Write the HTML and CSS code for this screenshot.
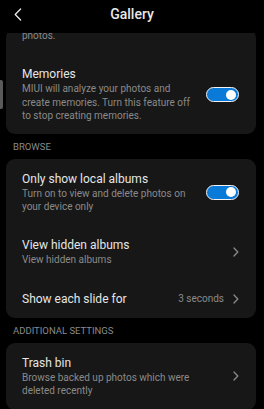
FILE: index.html
```html
<!DOCTYPE html>
<html lang="en">
<head>
<meta charset="utf-8">
<title>Gallery settings</title>
<link rel="stylesheet" href="styles.css">
</head>
<body>
<div class="screen">
  <header class="topbar">
    <svg class="back" width="8" height="13" viewBox="0 0 8 13" aria-hidden="true">
      <path d="M6.6 1 L1.2 6.5 L6.6 12" fill="none" stroke="#e8e8e8" stroke-width="1.3" stroke-linecap="round" stroke-linejoin="round"/>
    </svg>
    <h1 class="title">Gallery</h1>
    <span class="spacer"></span>
  </header>
  <main class="content">
    <section class="card card-first">
      <div class="item item-cut">
        <div class="text"><p class="desc">photos.</p></div>
      </div>
      <div class="item item-last">
        <div class="text">
          <p class="name">Memories</p>
          <p class="desc">MIUI will analyze your photos and create memories. Turn this feature off to stop creating memories.</p>
        </div>
        <span class="toggle on"><span class="knob"></span></span>
      </div>
    </section>

    <h2 class="label">Browse</h2>
    <section class="card">
      <div class="item">
        <div class="text">
          <p class="name">Only show local albums</p>
          <p class="desc">Turn on to view and delete photos on your device only</p>
        </div>
        <span class="toggle on"><span class="knob"></span></span>
      </div>
      <div class="item">
        <div class="text">
          <p class="name">View hidden albums</p>
          <p class="desc">View hidden albums</p>
        </div>
        <svg class="chev" width="6" height="10" viewBox="0 0 6 10" aria-hidden="true"><path d="M1 1 L4.8 5 L1 9" fill="none" stroke="#8a8a8a" stroke-width="1.3" stroke-linecap="round" stroke-linejoin="round"/></svg>
      </div>
      <div class="item item-last">
        <div class="text">
          <p class="name">Show each slide for</p>
        </div>
        <span class="value">3 seconds</span>
        <svg class="chev" width="6" height="10" viewBox="0 0 6 10" aria-hidden="true"><path d="M1 1 L4.8 5 L1 9" fill="none" stroke="#8a8a8a" stroke-width="1.3" stroke-linecap="round" stroke-linejoin="round"/></svg>
      </div>
    </section>

    <h2 class="label">Additional settings</h2>
    <section class="card">
      <div class="item">
        <div class="text">
          <p class="name">Trash bin</p>
          <p class="desc">Browse backed up photos which were deleted recently</p>
        </div>
        <svg class="chev" width="6" height="10" viewBox="0 0 6 10" aria-hidden="true"><path d="M1 1 L4.8 5 L1 9" fill="none" stroke="#8a8a8a" stroke-width="1.3" stroke-linecap="round" stroke-linejoin="round"/></svg>
      </div>
    </section>
  </main>
  <div class="scrollbar"></div>
</div>
</body>
</html>
```
FILE: styles.css
```css
* { box-sizing: border-box; }
html, body {
  margin: 0;
  padding: 0;
  background: #000;
}
body {
  font-family: Roboto, "Noto Sans", "Liberation Sans", sans-serif;
  color: #e6e6e6;
  width: 264px;
  height: 409px;
  overflow: hidden;
}
.screen {
  position: relative;
  width: 264px;
  height: 409px;
  display: flex;
  flex-direction: column;
  overflow: hidden;
}
.topbar {
  flex: 0 0 33px;
  height: 33px;
  display: grid;
  grid-template-columns: 1fr auto 1fr;
  align-items: start;
  padding-top: 4px;
  background: #000;
}
.back {
  justify-self: start;
  margin-left: 14px;
  margin-top: 4px;
}
.title {
  margin: 0;
  font-size: 14px;
  font-weight: 500;
  line-height: 20px;
  color: #e8e8e8;
}
.content {
  flex: 1;
  overflow: hidden;
}
.card {
  margin: 0 8px 0 6px;
  background: #171717;
  border-radius: 9px;
}
.card-first {
  margin-top: -4px;
}
.item {
  display: flex;
  align-items: center;
  padding: 12px 17px 12px 16px;
}
.item-cut {
  padding-top: 0;
}
.item-last {
  padding-bottom: 11px;
}
.text {
  flex: 1;
  min-width: 0;
}
.name {
  margin: 0;
  font-size: 12px;
  line-height: 16px;
  color: #e6e6e6;
}
.desc {
  margin: 0;
  max-width: 172px;
  font-size: 10px;
  line-height: 13.4px;
  color: #8a8a8a;
}
.label {
  margin: 0;
  padding: 7px 0 6px 13px;
  font-size: 9.5px;
  line-height: 12px;
  font-weight: 400;
  text-transform: uppercase;
  color: #8a8a8a;
}
.toggle {
  position: relative;
  flex: 0 0 33px;
  width: 33px;
  height: 15px;
  border-radius: 8px;
  border: 1.4px solid #f2f2f2;
  background: #0a7ad9;
}
.toggle .knob {
  position: absolute;
  right: 1.6px;
  top: 50%;
  width: 10px;
  height: 10px;
  margin-top: -5px;
  border-radius: 50%;
  background: #fff;
}
.value {
  font-size: 10px;
  line-height: 13px;
  color: #8a8a8a;
  margin-right: 9px;
}
.chev {
  flex: 0 0 6px;
  display: block;
}
.scrollbar {
  position: absolute;
  left: 0;
  top: 80px;
  width: 3px;
  height: 29px;
  border-radius: 0 2px 2px 0;
  background: #5a5a5a;
}
```
